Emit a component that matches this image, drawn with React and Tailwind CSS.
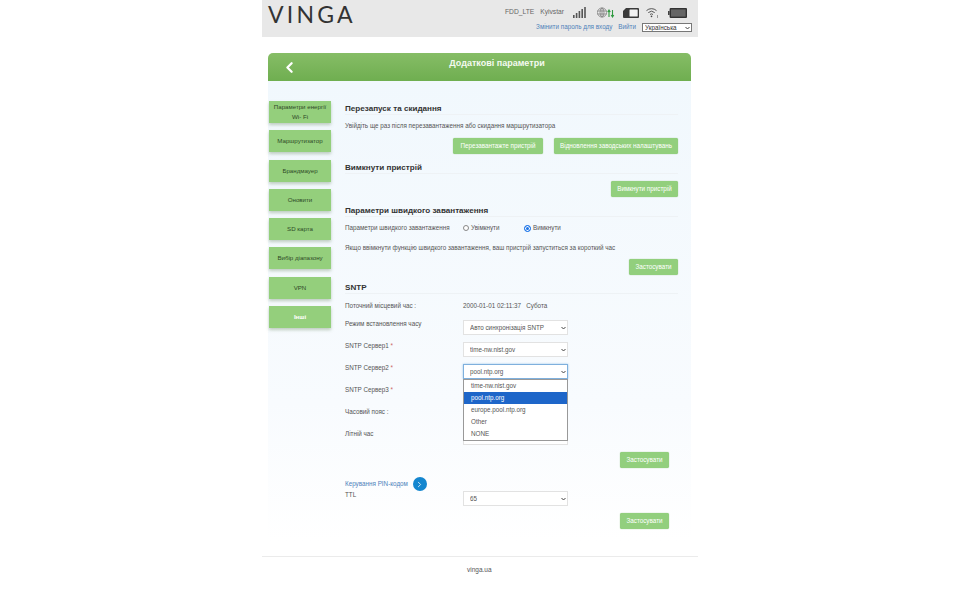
import { ChevronLeft, ChevronRight } from 'lucide-react';

const MENU = ['Маршрутизатор', 'Брандмауер', 'Оновити', 'SD карта', 'Вибір діапазону', 'VPN'];

function GreenButton({ children, className = '' }) {
  return (
    <button className={`h-4 rounded-[2px] bg-[#92cf7d] text-[6.3px] leading-none text-white shadow-[0_0_1px_#7ab565] ${className}`}>
      {children}
    </button>
  );
}

function SideItem({ children, className = 'text-[#2f4a27]' }) {
  return (
    <div className={`h-[22px] flex items-center justify-center text-center text-[6.15px] leading-[10px] bg-[#94cf7c] shadow-[0_2px_3px_rgba(90,120,80,0.35)] ${className}`}>
      {children}
    </div>
  );
}

function Heading({ children, className = '' }) {
  return (
    <h2 className={`h-3 text-[8.1px] leading-3 font-bold text-[#333] border-b border-[#eef2f5] ${className}`}>{children}</h2>
  );
}

function SmallArrow({ className = '' }) {
  return (
    <svg className={`absolute pointer-events-none ${className}`} width="5" height="4" viewBox="0 0 5 4" fill="none" stroke="#444" strokeWidth="1">
      <path d="M.5 1l2 2 2-2" />
    </svg>
  );
}

function Field({ options = [], focus = false }) {
  return (
    <div className="relative w-[105px] h-[15px]">
      <select
        defaultValue={options[0]}
        className={`block appearance-none w-full h-full bg-white pl-[6px] text-[6.3px] text-[#555] outline-none ${focus ? 'border border-[#7fb0dd] shadow-[0_0_2px_#9cc6ea]' : 'border border-[#e2e2e2]'}`}
      >
        {options.map(o => <option key={o}>{o}</option>)}
      </select>
      <SmallArrow className="right-[2px] top-[6px]" />
    </div>
  );
}

function Row({ label, star, children }) {
  return (
    <div className="relative h-[22px] flex items-start">
      <div className="w-[118px] h-2 text-[6.3px] leading-2 text-[#555]">
        {label}
        {star && <span className="text-[#c66]"> *</span>}
      </div>
      {children}
    </div>
  );
}

function StatusIcons() {
  return (
    <div className="flex items-center ml-[9px]">
      {/* signal */}
      <svg width="13" height="11" viewBox="0 0 13 11" fill="#555">
        <rect x="0" y="8" width="1.6" height="3" />
        <rect x="2.8" y="6" width="1.6" height="5" />
        <rect x="5.6" y="4" width="1.6" height="7" />
        <rect x="8.4" y="2" width="1.6" height="9" />
        <rect x="11.2" y="0" width="1.6" height="11" />
      </svg>
      {/* globe with arrows */}
      <svg className="ml-[11px]" width="18" height="11" viewBox="0 0 18 11" fill="none">
        <g stroke="#777" strokeWidth="0.7">
          <circle cx="5" cy="5.5" r="4.6" />
          <ellipse cx="5" cy="5.5" rx="2" ry="4.6" />
          <path d="M5 1v9M.5 4h9M.5 7h9" />
        </g>
        <path d="M12 10V3.5M10.7 5L12 3l1.3 2" stroke="#2f9a3f" strokeWidth="1.1" />
        <path d="M15.5 3v6.5M14.2 8l1.3 2 1.3-2" stroke="#2f9a3f" strokeWidth="1.1" />
      </svg>
      {/* sim */}
      <svg className="ml-[8px]" width="16" height="10" viewBox="0 0 16 10">
        <path d="M3 0H15a1 1 0 0 1 1 1V9a1 1 0 0 1-1 1H1a1 1 0 0 1-1-1V3z" fill="#3a3a3a" />
        <rect x="6.5" y="1.5" width="8.2" height="7" rx="0.5" fill="#f2f2f2" />
      </svg>
      {/* wifi */}
      <svg className="ml-[7px]" width="13" height="11" viewBox="0 0 13 11" fill="none" stroke="#444">
        <path d="M.5 3.6a7.4 7.4 0 0 1 10 0" strokeWidth="0.9" />
        <path d="M2.3 5.6a4.8 4.8 0 0 1 6.4 0" strokeWidth="0.9" />
        <path d="M4 7.5a2.3 2.3 0 0 1 3 0" strokeWidth="0.9" />
        <circle cx="5.5" cy="9.4" r="0.8" fill="#444" stroke="none" />
        <path d="M11.5 8v3" strokeWidth="0.7" stroke="#777" />
      </svg>
      {/* battery */}
      <svg className="ml-[9px]" width="19" height="10" viewBox="0 0 19 10">
        <rect x="0" y="3" width="1.6" height="4" fill="#444" />
        <rect x="1.6" y="0" width="17.4" height="10" rx="1" fill="#333" />
        <rect x="3" y="1.4" width="14.6" height="7.2" fill="#666" />
      </svg>
    </div>
  );
}

export default function App() {
  return (
    <div className="w-[436px] mx-auto bg-white font-['Liberation_Sans',Arial,sans-serif]">
      {/* top bar */}
      <header className="h-[37px] bg-[#e8e8e8] flex justify-between pl-[6px] pr-[6px]">
        <div className="text-[23px] leading-[28px] text-[#333] tracking-[3.2px] font-['Lato',sans-serif] font-normal">VINGA</div>
        <div className="flex flex-col items-end">
          <div className="flex items-center h-[11px] mt-[7px] pr-[5px] text-[6.7px] text-[#666]">
            <span>FDD_LTE</span>
            <span className="ml-[6px]">Kyivstar</span>
            <StatusIcons />
          </div>
          <div className="flex items-center h-[10px] mt-[4px] text-[6.3px] text-[#4f82ba]">
            <span>Змінити пароль для входу</span>
            <span className="ml-[6px]">Вийти</span>
            <div className="relative ml-[6px] w-[50px] h-[9px]">
              <select defaultValue="Українська" className="block appearance-none w-full h-full pl-[2px] bg-white border border-[#777] text-[6.3px] leading-[7px] text-[#333]">
                <option>Українська</option>
              </select>
              <SmallArrow className="right-[2px] top-[3px]" />
            </div>
          </div>
        </div>
      </header>

      {/* page title */}
      <div className="mt-4 ml-[6px] w-[423px] h-7 relative rounded-t-[5px] bg-gradient-to-b from-[#86bd66] to-[#6fae50] flex justify-center pl-[35px]">
        <ChevronLeft className="absolute left-[13px] top-[6px] text-white" size={17} strokeWidth={3.2} />
        <span className="mt-[5px] text-[9px] leading-[11px] font-bold text-[#f4faf0]">Додаткові параметри</span>
      </div>

      <div className="ml-[6px] w-[423px] h-[460px] bg-gradient-to-b from-[#f1f8fd] via-[#f8fbfe] via-70% to-white flex">
        {/* side menu */}
        <aside className="w-[62px] ml-px mt-5 flex flex-col gap-[7.3px]">
          <SideItem><span>Параметри енергії<br />Wi- Fi</span></SideItem>
          {MENU.map(m => <SideItem key={m}>{m}</SideItem>)}
          <SideItem className="text-white font-bold">Інші</SideItem>
        </aside>

        {/* settings */}
        <main className="w-[333px] ml-[14px] pt-[22px]">
          <Heading>Перезапуск та скидання</Heading>
          <p className="mt-[7px] h-2 text-[6.3px] leading-2 text-[#555]">Увійдіть ще раз після перезавантаження або скидання маршрутизатора</p>
          <div className="mt-2 flex justify-end gap-[11px]">
            <GreenButton className="w-[90px]">Перезавантажте пристрій</GreenButton>
            <GreenButton className="w-[124px]">Відновлення заводських налаштувань</GreenButton>
          </div>

          <Heading className="mt-2">Вимкнути пристрій</Heading>
          <div className="mt-[7px] flex justify-end">
            <GreenButton className="w-[67px]">Вимкнути пристрій</GreenButton>
          </div>

          <Heading className="mt-2">Параметри швидкого завантаження</Heading>
          <div className="mt-[7px] h-2 flex items-center text-[6.3px] text-[#555]">
            <span className="w-[118px]">Параметри швидкого завантаження</span>
            <input type="radio" name="fastboot" className="appearance-none w-[6px] h-[6px] rounded-full border border-[#888] bg-white" />
            <span className="ml-[2px] w-[53px]">Увімкнути</span>
            <input type="radio" name="fastboot" defaultChecked className="appearance-none w-[7px] h-[7px] rounded-full border border-[#1a73e8] bg-[#1a73e8] shadow-[inset_0_0_0_1px_white]" />
            <span className="ml-[2px]">Вимкнути</span>
          </div>
          <p className="mt-3 h-2 text-[6.3px] leading-2 text-[#555]">Якщо ввімкнути функцію швидкого завантаження, ваш пристрій запуститься за короткий час</p>
          <div className="mt-[7px] flex justify-end">
            <GreenButton className="w-[49px]">Застосувати</GreenButton>
          </div>

          <Heading className="mt-[7px]">SNTP</Heading>
          <div className="mt-2 h-2 flex text-[6.3px] leading-2 text-[#555]">
            <span className="w-[118px]">Поточний місцевий час :</span>
            <span>2000-01-01 02:11:37&nbsp;&nbsp;&nbsp;Субота</span>
          </div>
          <div className="mt-[10px]">
            <Row label="Режим встановлення часу"><Field options={['Авто синхронізація SNTP']} /></Row>
            <Row label="SNTP Сервер1" star><Field options={['time-nw.nist.gov']} /></Row>
            <Row label="SNTP Сервер2" star>
              <Field focus options={['pool.ntp.org']} />
              {/* open dropdown */}
              <ul className="absolute z-10 left-[118px] top-[15px] w-[105px] h-[62px] bg-white border border-[#999] text-[6.3px] leading-3 text-[#555]">
                <li className="h-3 pl-[7px]">time-nw.nist.gov</li>
                <li className="h-3 pl-[7px] bg-[#1e66c9] text-white">pool.ntp.org</li>
                <li className="h-3 pl-[7px]">europe.pool.ntp.org</li>
                <li className="h-3 pl-[7px]">Other</li>
                <li className="h-3 pl-[7px]">NONE</li>
              </ul>
            </Row>
            <Row label="SNTP Сервер3" star><Field /></Row>
            <Row label="Часовий пояс :"><Field /></Row>
            <Row label="Літній час"><Field /></Row>
          </div>
          <div className="flex justify-end pr-[9px]">
            <GreenButton className="w-[49px]">Застосувати</GreenButton>
          </div>

          <div className="mt-[9px] h-[14px] flex items-center text-[6.3px] text-[#4f82ba]">
            <span>Керування PIN-кодом</span>
            <span className="ml-[5px] w-[14px] h-[14px] rounded-full bg-[#1486cf] flex items-center justify-center">
              <ChevronRight className="text-white" size={9} strokeWidth={2} />
            </span>
          </div>
          <Row label="TTL"><Field options={['65']} /></Row>
          <div className="flex justify-end pr-[9px]">
            <GreenButton className="w-[49px]">Застосувати</GreenButton>
          </div>
        </main>
      </div>

      <footer className="mt-[15px] h-[44px] border-t border-[#ebebeb] pt-[9px] pl-[205px] text-[6.5px] leading-2 text-[#555]">vinga.ua</footer>
    </div>
  );
}
